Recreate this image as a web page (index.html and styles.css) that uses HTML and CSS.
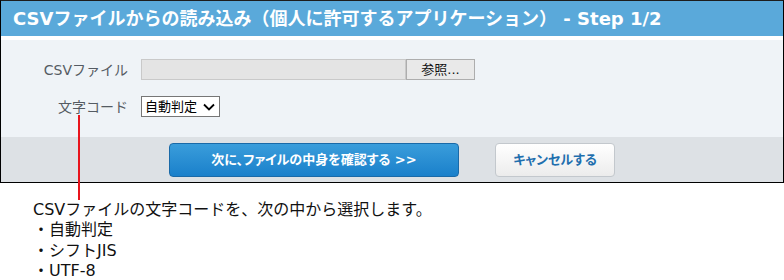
FILE: index.html
```html
<!DOCTYPE html>
<html lang="ja">
<head>
<meta charset="utf-8">
<title>CSV</title>
<link rel="stylesheet" href="styles.css">
</head>
<body>
<div class="dialog">
  <div class="header">CSVファイルからの読み込み（個人に許可するアプリケーション） - Step 1/2</div>
  <div class="body">
    <div class="row">
      <div class="label">CSVファイル</div>
      <div class="file">
        <div class="file-path"></div>
        <div class="file-btn">参照...</div>
      </div>
    </div>
    <div class="row">
      <div class="label">文字コード</div>
      <div class="select">
        <span>自動判定</span>
        <svg class="chev" width="12" height="8" viewBox="0 0 12 8"><path d="M1 1.5 L6 6.5 L11 1.5" fill="none" stroke="#000" stroke-width="1.8"/></svg>
      </div>
    </div>
    <div class="callout-line"></div>
  </div>
  <div class="footer">
    <div class="btn btn-primary">次に、ファイルの中身を確認する &gt;&gt;</div>
    <div class="btn btn-cancel">キャンセルする</div>
  </div>
</div>
<div class="note">
  <p class="note-line">CSVファイルの文字コードを、次の中から選択します。</p>
  <p class="note-line">・自動判定</p>
  <p class="note-line">・シフトJIS</p>
  <p class="note-line">・UTF-8</p>
</div>
</body>
</html>
```
FILE: styles.css
```css
html, body {
  margin: 0;
  padding: 0;
  background: #fff;
}
body {
  font-family: "DejaVu Sans", "Noto Sans CJK JP", sans-serif;
  color: #000;
}
.dialog {
  border: 1px solid #000;
  border-top-color: #1d1d1d;
  position: relative;
}
.header {
  height: 35px;
  background: #5aa9da;
  border-bottom: 4px solid #fff;
  color: #fff;
  font-weight: bold;
  font-size: 18px;
  line-height: 35px;
  padding-left: 12px;
  white-space: nowrap;
  overflow: hidden;
}
.body {
  background: #eff3f7;
  padding: 19px 0 20px 0;
  display: flex;
  flex-direction: column;
  gap: 16px;
  position: relative;
}
.row {
  display: flex;
  align-items: center;
  height: 21px;
}
.label {
  width: 127px;
  text-align: right;
  padding-right: 13px;
  font-size: 14px;
  color: #555b63;
  white-space: nowrap;
  margin-top: -2px;
}
.file {
  display: flex;
  height: 21px;
}
.file-path {
  width: 263px;
  height: 19px;
  background: #e4e4e4;
  border: 1px solid #c9c9c9;
}
.file-btn {
  width: 67px;
  height: 19px;
  background: #e9e9e9;
  border: 1px solid #adadad;
  font-size: 13px;
  line-height: 19px;
  text-align: center;
  color: #111;
}
.select {
  width: 70px;
  height: 19px;
  background: #fff;
  border: 1px solid #767676;
  display: flex;
  align-items: center;
  justify-content: space-between;
  padding: 0 4px 0 3px;
}
.select span {
  font-size: 13px;
  line-height: 19px;
}
.chev {
  display: block;
}
.callout-line {
  position: absolute;
  left: 77px;
  top: 75px;
  width: 2px;
  height: 85px;
  background: #e8141c;
  z-index: 2;
}
.footer {
  background: #dde1e5;
  height: 45px;
  padding-top: 6px;
  box-sizing: border-box;
  display: flex;
  justify-content: center;
  gap: 36px;
  align-items: flex-start;
}
.btn {
  height: 34px;
  box-sizing: border-box;
  border-radius: 4px;
  font-size: 13px;
  font-weight: bold;
  line-height: 32px;
  text-align: center;
  font-feature-settings: "palt";
  white-space: nowrap;
}
.btn-primary {
  width: 290px;
  color: #fff;
  background: linear-gradient(#3a9ddb, #1a80cb);
  border: 1px solid #1a6aa8;
}
.btn-cancel {
  width: 120px;
  color: #1f6fae;
  background: linear-gradient(#ffffff, #ececec);
  border: 1px solid #c3c8cd;
}
.note {
  padding: 17px 0 0 33px;
  color: #111;
}
.note-line {
  margin: 0;
  font-size: 16px;
  line-height: 20.3px;
}
```
